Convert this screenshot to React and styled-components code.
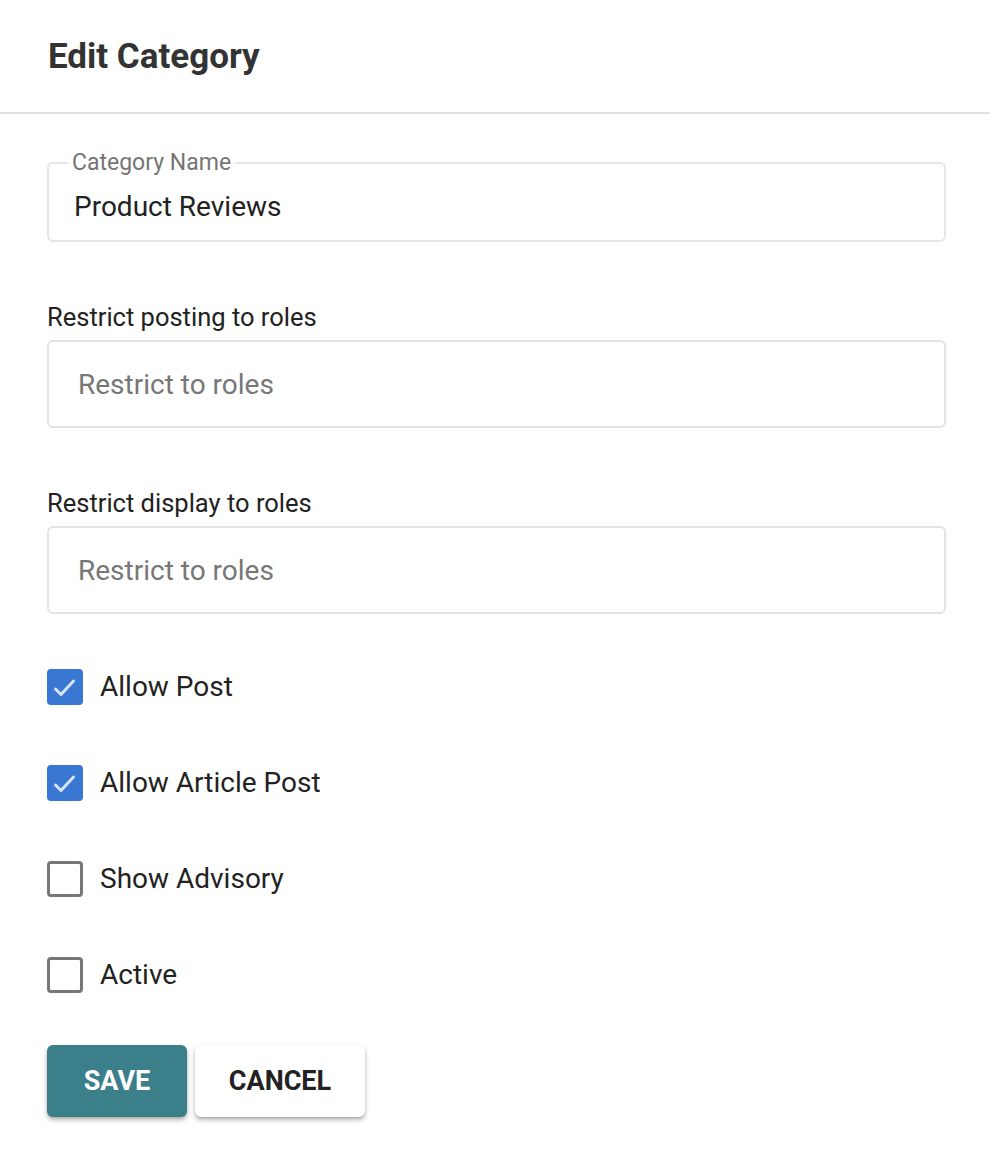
import React, { useState } from "react";
import styled, { createGlobalStyle } from "styled-components";

const GlobalStyle = createGlobalStyle`
  body {
    margin: 0;
    background: #fff;
    font-family: Roboto, "Noto Sans", "Liberation Sans", sans-serif;
    color: #222;
  }
`;

const Page = styled.div`
  width: 990px;
  min-height: 1162px;
  background: #fff;
`;

const Header = styled.header`
  height: 112px;
  display: flex;
  align-items: center;
  padding-left: 48px;
  border-bottom: 2px solid #e2e2e2;
`;

const Title = styled.h1`
  margin: 0;
  font-size: 35px;
  font-weight: 700;
  color: #333;
`;

const Form = styled.form`
  display: flex;
  flex-direction: column;
  padding: 36px 44px 0 47px;
`;

const Fieldset = styled.fieldset`
  margin: 0;
  padding: 0 25px 17px;
  border: 2px solid #e6e6e6;
  border-radius: 6px;
`;

const Legend = styled.legend`
  margin-left: -6px;
  padding: 0 4px;
  font-size: 23px;
  line-height: 26px;
  color: #757575;
`;

const Value = styled.div`
  margin-top: 15px;
  font-size: 28px;
  line-height: 32px;
  color: #222;
`;

const Section = styled.div`
  display: flex;
  flex-direction: column;
  gap: 8px;
  margin-top: 60px;
`;

const Label = styled.label`
  font-size: 25.5px;
  line-height: 30px;
  color: #222;
`;

const RoleInput = styled.input`
  box-sizing: border-box;
  height: 88px;
  width: 100%;
  padding: 0 29px;
  border: 2px solid #e3e3e3;
  border-radius: 6px;
  font-family: inherit;
  font-size: 28px;
  color: #222;
  outline: none;

  &::placeholder {
    color: #777;
  }
`;

const Checks = styled.div`
  display: flex;
  flex-direction: column;
  gap: 60px;
  margin-top: 55px;
`;

const CheckRow = styled.label`
  display: flex;
  align-items: center;
  gap: 17px;
  height: 36px;
  font-size: 28px;
  line-height: 36px;
  color: #222;
  cursor: pointer;
`;

const Box = styled.span`
  box-sizing: border-box;
  flex: none;
  width: 36px;
  height: 36px;
  border-radius: 4px;
  display: flex;
  align-items: center;
  justify-content: center;
  background: ${(p) => (p.checked ? "#3a77d2" : "#fff")};
  border: ${(p) => (p.checked ? "none" : "3px solid #777")};
`;

const Buttons = styled.div`
  display: flex;
  gap: 8px;
  margin-top: 52px;
`;

const Button = styled.button`
  height: 72px;
  width: ${(p) => p.w}px;
  border: none;
  border-radius: 6px;
  font-family: inherit;
  font-size: 27px;
  font-weight: 700;
  background: ${(p) => (p.primary ? "#3a7f8a" : "#fff")};
  color: ${(p) => (p.primary ? "#fff" : "#222")};
  box-shadow: 0 3px 5px rgba(0, 0, 0, 0.28), 0 1px 2px rgba(0, 0, 0, 0.12);
  cursor: pointer;
`;

// soft white tick inside a checked box
const Check = () => (
  <svg width="36" height="36" viewBox="0 0 36 36">
    <path
      d="M8.5 20 L14 25.5 L26.5 12"
      fill="none"
      stroke="#fff"
      strokeWidth="3"
      strokeLinecap="round"
      strokeLinejoin="round"
      opacity="0.8"
    />
  </svg>
);

const options = [
  { id: "post", label: "Allow Post", on: true },
  { id: "article", label: "Allow Article Post", on: true },
  { id: "advisory", label: "Show Advisory", on: false },
  { id: "active", label: "Active", on: false },
];

const App = () => {
  const [flags, setFlags] = useState(
    Object.fromEntries(options.map((o) => [o.id, o.on]))
  );
  const toggle = (id) => setFlags((f) => ({ ...f, [id]: !f[id] }));

  return (
    <Page>
      <GlobalStyle />
      <Header>
        <Title>Edit Category</Title>
      </Header>
      <Form onSubmit={(e) => e.preventDefault()}>
        <Fieldset>
          <Legend>Category Name</Legend>
          <Value>Product Reviews</Value>
        </Fieldset>

        <Section>
          <Label>Restrict posting to roles</Label>
          <RoleInput placeholder="Restrict to roles" />
        </Section>

        <Section>
          <Label>Restrict display to roles</Label>
          <RoleInput placeholder="Restrict to roles" />
        </Section>

        <Checks>
          {options.map((o) => (
            <CheckRow key={o.id} onClick={() => toggle(o.id)}>
              <Box checked={flags[o.id]}>{flags[o.id] && <Check />}</Box>
              {o.label}
            </CheckRow>
          ))}
        </Checks>

        <Buttons>
          <Button primary w={140}>SAVE</Button>
          <Button w={170}>CANCEL</Button>
        </Buttons>
      </Form>
    </Page>
  );
};

export default App;
